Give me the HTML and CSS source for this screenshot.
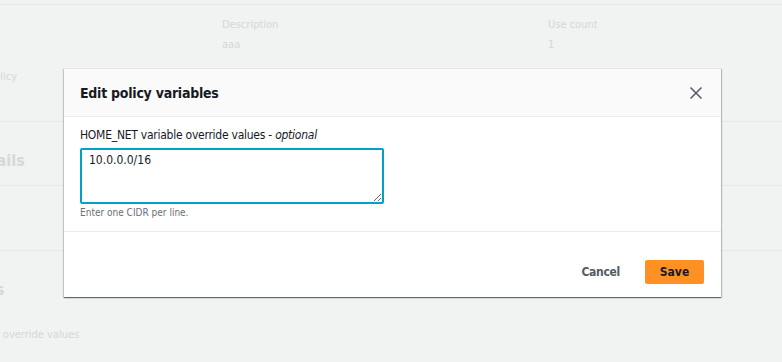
FILE: index.html
```html
<!DOCTYPE html>
<html>
<head>
    <title>Edit policy variables</title>
    <link rel="stylesheet" href="styles.css">
</head>
<body>
    <div class="page">
        <div class="summary">
            <div class="cell"></div>
            <div class="cell">
                <div class="key">Description</div>
                <div class="value">aaa</div>
            </div>
            <div class="cell">
                <div class="key">Use count</div>
                <div class="value">1</div>
            </div>
            <div class="cell cut-policy">policy</div>
        </div>
        <div class="section details">
            <h3 class="cut-details">Details</h3>
        </div>
        <div class="section empty"></div>
        <div class="section vars">
            <h3 class="cut-vars">Variables</h3>
            <div class="cut-override">HOME_NET variable override values</div>
        </div>
    </div>

    <div class="modal">
        <div class="modal-header">
            <h2>Edit policy variables</h2>
            <button class="close" type="button" aria-label="Close">
                <svg width="14" height="14" viewBox="0 0 14 14"><path d="M1.5 1.5 L12.5 12.5 M12.5 1.5 L1.5 12.5" stroke="#545b64" stroke-width="1.5" fill="none"/></svg>
            </button>
        </div>
        <div class="modal-body">
            <label for="homeNet">HOME_NET variable override values - <i>optional</i></label>
            <textarea id="homeNet">10.0.0.0/16</textarea>
            <div class="hint">Enter one CIDR per line.</div>
        </div>
        <div class="modal-footer">
            <button class="cancel" type="button">Cancel</button>
            <button class="save" type="button">Save</button>
        </div>
    </div>
</body>
</html>
```

FILE: styles.css
```css
body {
    margin: 0;
    padding: 0;
    background-color: #f1f2f2;
    font-family: "DejaVu Sans Condensed", "Liberation Sans", sans-serif;
    color: #16191f;
    height: 362px;
    overflow: hidden;
    position: relative;
}
.page {
    color: #d3d8d8;
    font-size: 11px;
}
.summary {
    margin-top: 4px;
    border-top: 1px solid #e8eaea;
    border-bottom: 1px solid #e6e8e8;
    height: 118px;
    box-sizing: border-box;
    padding-top: 11px;
    display: grid;
    grid-template-columns: 222px 326px 1fr;
    grid-template-rows: 52px 1fr;
}
.key {
    line-height: 18px;
}
.value {
    margin-top: 2px;
    line-height: 18px;
}
.cut-policy {
    margin-left: -12px;
    line-height: 18px;
}
.section {
    border-bottom: 1px solid #e6e8e8;
    box-sizing: border-box;
}
.section h3 {
    margin-top: 0;
    margin-bottom: 0;
    font-size: 16px;
    line-height: 20px;
}
.details {
    height: 64px;
    padding-top: 29px;
}
.cut-details {
    margin-left: -32px;
}
.empty {
    height: 65px;
}
.vars {
    padding-top: 29px;
    border-bottom: none;
}
.cut-vars {
    margin-left: -71px;
}
.cut-override {
    margin: 26px 0 0 -98px;
    line-height: 18px;
}
.modal {
    position: absolute;
    left: 64px;
    top: 68px;
    width: 657px;
    background: white;
    border-top: 1px solid #e3e6e6;
    box-shadow: 0 1px 1px 0 rgba(0, 28, 36, 0.45), 1px 1px 1px 0 rgba(0, 28, 36, 0.2), -1px 1px 1px 0 rgba(0, 28, 36, 0.15);
}
.modal-header {
    height: 47px;
    background: #fafafa;
    border-bottom: 1px solid #eaeded;
    display: flex;
    align-items: center;
    justify-content: space-between;
    padding: 0 16px;
}
.modal-header h2 {
    margin: 0;
    font-size: 14px;
    font-weight: bold;
    letter-spacing: -0.25px;
}
.close {
    background: none;
    border: none;
    padding: 0;
    width: 18px;
    height: 18px;
    display: flex;
    align-items: center;
    justify-content: center;
}
.modal-body {
    padding: 11px 16px 0;
    height: 115px;
    box-sizing: border-box;
    border-bottom: 1px solid #eaeded;
}
label {
    display: block;
    font-size: 12px;
    line-height: 14px;
    margin-bottom: 6px;
    letter-spacing: -0.25px;
}
textarea {
    display: block;
    width: 304px;
    height: 56px;
    box-sizing: border-box;
    border: 2px solid #00a1c9;
    border-radius: 2px;
    padding: 2px 7px;
    font-family: inherit;
    font-size: 12px;
    line-height: 16px;
    color: #16191f;
    resize: vertical;
    outline: none;
}
.hint {
    font-size: 10px;
    line-height: 14px;
    color: #687078;
    margin-top: 2px;
}
.modal-footer {
    display: flex;
    align-items: center;
    justify-content: flex-end;
    gap: 25px;
    padding: 28px 17px 13px;
}
.cancel {
    background: none;
    border: none;
    font-family: inherit;
    font-size: 12px;
    font-weight: bold;
    color: #545b64;
    padding: 0;
    letter-spacing: -0.3px;
}
.save {
    background: #ff9124;
    border: none;
    border-radius: 2px;
    width: 59px;
    height: 24px;
    font-family: inherit;
    font-size: 12px;
    font-weight: bold;
    color: #16191f;
}
```
